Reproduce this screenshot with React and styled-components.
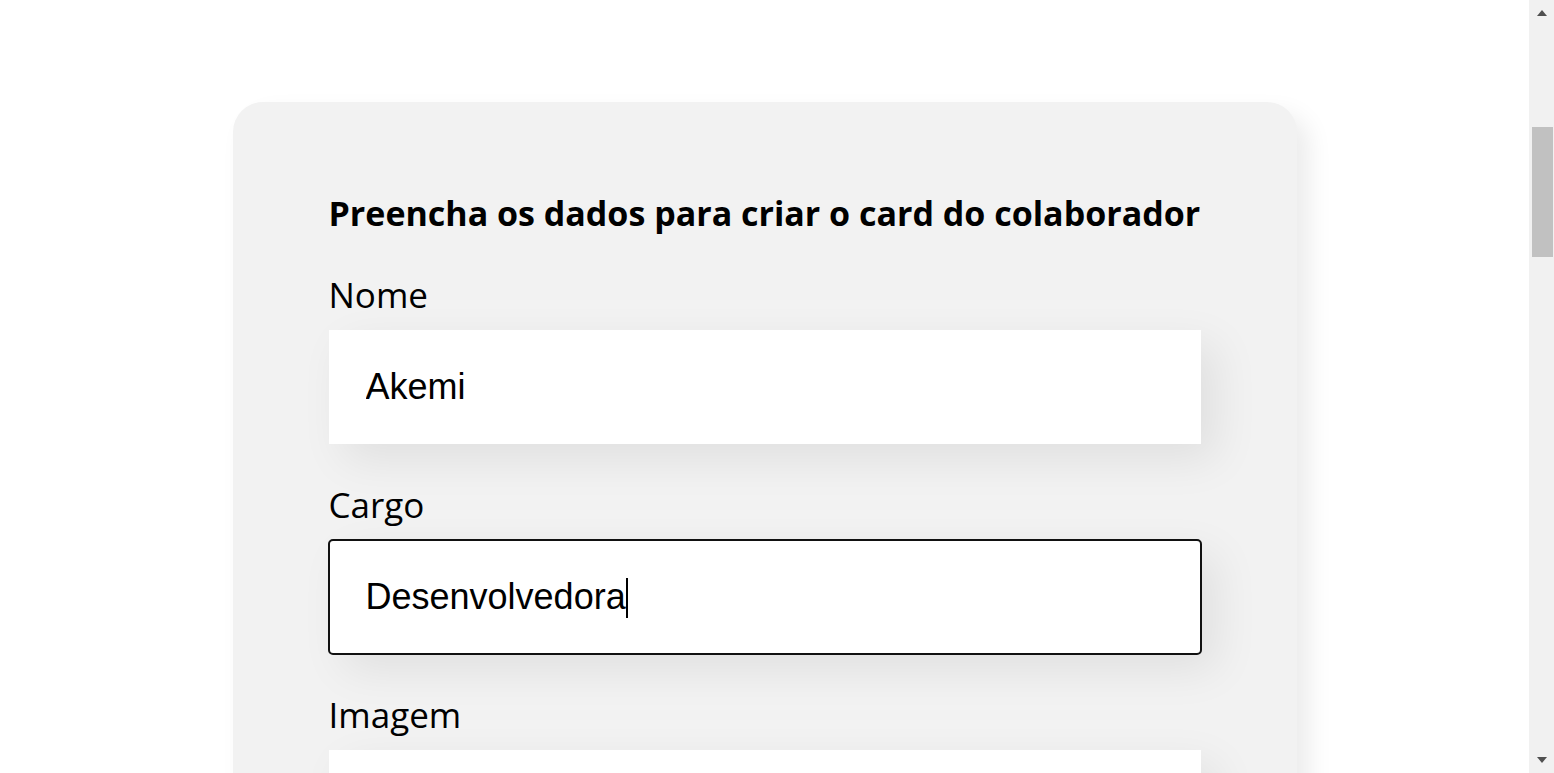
import styled, { createGlobalStyle } from 'styled-components';

const GlobalStyle = createGlobalStyle`
  body {
    margin: 0;
    background: #fff;
    font-family: "Open Sans", "Noto Sans", sans-serif;
    color: #000;
  }
`;

const fields = [
  { label: 'Nome', value: 'Akemi' },
  { label: 'Cargo', value: 'Desenvolvedora', focused: true },
  { label: 'Imagem', value: '' },
];

const App = () => {
  return (
    <>
      <GlobalStyle />
      <Page>
        <Card onSubmit={(e) => e.preventDefault()}>
          <Title>Preencha os dados para criar o card do colaborador</Title>

          {fields.map((f) => (
            <Field key={f.label}>
              <Label>{f.label}</Label>
              <InputWrap>
                <Input
                  type="text"
                  defaultValue={f.value}
                  $focused={f.focused}
                  readOnly
                />
                {f.focused && (
                  <Mirror aria-hidden="true">
                    <Ghost>{f.value}</Ghost>
                    <Caret />
                  </Mirror>
                )}
              </InputWrap>
            </Field>
          ))}

          <Field>
            <Label>Time</Label>
            <Select defaultValue="">
              <option value=""></option>
              <option>Programação</option>
              <option>Front-End</option>
              <option>Data Science</option>
            </Select>
          </Field>

          <Button type="submit">Criar card</Button>
        </Card>
      </Page>

      {/* browser scrollbar as seen in the screenshot */}
      <ScrollTrack aria-hidden="true">
        <Arrow />
        <Thumb />
        <Arrow $down />
      </ScrollTrack>
    </>
  );
};

/* ================= STYLES ================= */

const Page = styled.main`
  display: flex;
  justify-content: center;
  padding: 102px 25px 400px 0;
`;

const Card = styled.form`
  box-sizing: border-box;
  width: 1064px;
  padding: 88px 96px 54px 96px;
  background: #f2f2f2;
  border-radius: 30px;
  box-shadow: 12px 12px 24px rgba(0, 0, 0, 0.08);
  display: flex;
  flex-direction: column;
  gap: 37px;
`;

const Title = styled.h2`
  margin: 0 0 -2px;
  font-size: 34px;
  font-weight: 700;
  line-height: 46px;
  white-space: nowrap;
`;

const Field = styled.div`
  display: flex;
  flex-direction: column;
`;

const Label = styled.label`
  display: block;
  margin-bottom: 11px;
  font-size: 35px;
  line-height: 48px;
  font-weight: 400;
`;

const InputWrap = styled.div`
  position: relative;
`;

const Input = styled.input`
  box-sizing: border-box;
  display: block;
  width: 100%;
  height: 114px;
  padding: 0 37px;
  border: none;
  background: #fff;
  font-family: "Liberation Sans", Arial, sans-serif;
  font-size: 36px;
  color: #000;
  box-shadow: 15px 15px 45px rgba(0, 0, 0, 0.08);
  outline: ${(p) => (p.$focused ? '2px solid #111' : 'none')};
  outline-offset: -1px;
  border-radius: ${(p) => (p.$focused ? '4px' : '0')};
`;

const Mirror = styled.div`
  position: absolute;
  inset: 0;
  padding: 0 37px;
  display: flex;
  align-items: center;
  pointer-events: none;
  font-family: "Liberation Sans", Arial, sans-serif;
  font-size: 36px;
`;

const Ghost = styled.span`
  color: transparent;
  white-space: pre;
`;

const Caret = styled.span`
  display: block;
  width: 2px;
  height: 40px;
  margin-top: 2px;
  background: #000;
`;

const Select = styled.select`
  box-sizing: border-box;
  width: 100%;
  height: 114px;
  padding: 0 36px;
  border: none;
  background: #fff;
  font-family: "Liberation Sans", Arial, sans-serif;
  font-size: 36px;
  box-shadow: 15px 15px 45px rgba(0, 0, 0, 0.08);
`;

const Button = styled.button`
  align-self: flex-start;
  padding: 24px 48px;
  border: none;
  border-radius: 15px;
  background: #6278f7;
  color: #fff;
  font-family: "Open Sans", sans-serif;
  font-size: 27px;
  font-weight: 700;
  cursor: pointer;
`;

const ScrollTrack = styled.div`
  position: fixed;
  top: 0;
  right: 0;
  bottom: 0;
  width: 25px;
  background: #f1f1f1;
  display: flex;
  flex-direction: column;
  align-items: center;
`;

const Arrow = styled.div`
  width: 0;
  height: 0;
  margin: ${(p) => (p.$down ? 'auto 0 10px' : '10px 0 0')};
  border-left: 5px solid transparent;
  border-right: 5px solid transparent;
  ${(p) =>
    p.$down ? 'border-top: 6px solid #505050;' : 'border-bottom: 6px solid #505050;'}
`;

const Thumb = styled.div`
  width: 21px;
  height: 130px;
  margin-top: 111px;
  margin-left: 2px;
  background: #c1c1c1;
`;

export default App;
